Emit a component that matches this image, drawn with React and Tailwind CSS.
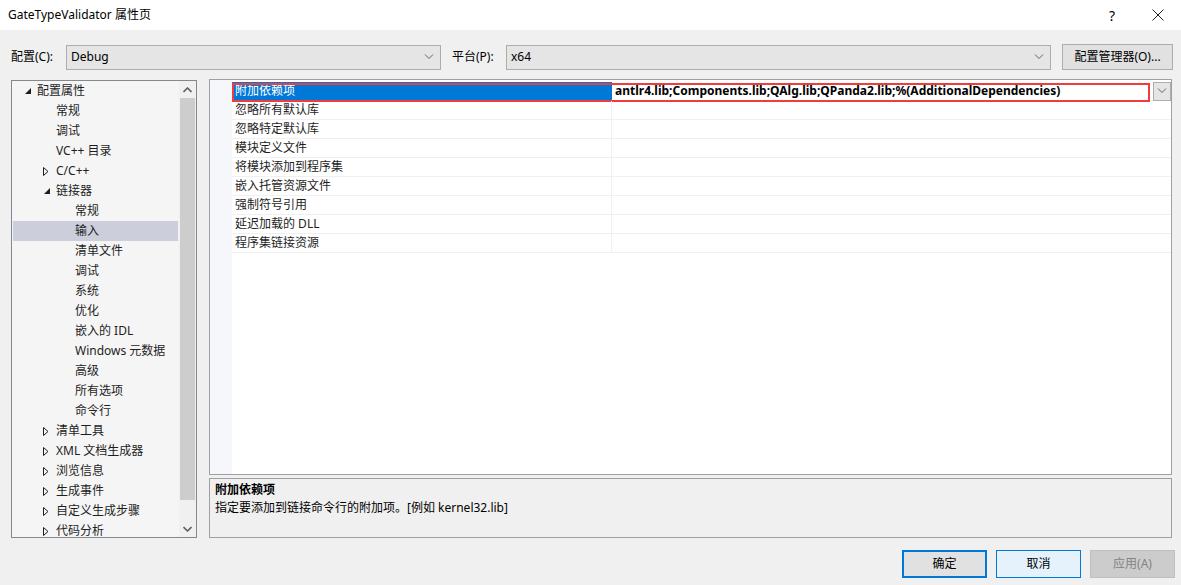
const font = { fontFamily: '"Noto Sans", "Noto Sans CJK SC", sans-serif' };

const tree = [
  { label: '配置属性', level: 0, arrow: 'open' },
  { label: '常规', level: 1 },
  { label: '调试', level: 1 },
  { label: 'VC++ 目录', level: 1 },
  { label: 'C/C++', level: 1, arrow: 'closed' },
  { label: '链接器', level: 1, arrow: 'open' },
  { label: '常规', level: 2 },
  { label: '输入', level: 2, selected: true },
  { label: '清单文件', level: 2 },
  { label: '调试', level: 2 },
  { label: '系统', level: 2 },
  { label: '优化', level: 2 },
  { label: '嵌入的 IDL', level: 2 },
  { label: 'Windows 元数据', level: 2 },
  { label: '高级', level: 2 },
  { label: '所有选项', level: 2 },
  { label: '命令行', level: 2 },
  { label: '清单工具', level: 1, arrow: 'closed' },
  { label: 'XML 文档生成器', level: 1, arrow: 'closed' },
  { label: '浏览信息', level: 1, arrow: 'closed' },
  { label: '生成事件', level: 1, arrow: 'closed' },
  { label: '自定义生成步骤', level: 1, arrow: 'closed' },
  { label: '代码分析', level: 1, arrow: 'closed' },
];

const props = [
  '附加依赖项',
  '忽略所有默认库',
  '忽略特定默认库',
  '模块定义文件',
  '将模块添加到程序集',
  '嵌入托管资源文件',
  '强制符号引用',
  '延迟加载的 DLL',
  '程序集链接资源',
];

function Chevron({ className = '' }) {
  return (
    <svg width="10" height="6" viewBox="0 0 10 6" className={className}>
      <path d="M1 0.5 L5 4.5 L9 0.5" fill="none" stroke="#606060" strokeWidth="1" />
    </svg>
  );
}

function Combo({ value, className }) {
  return (
    <div className={`h-[25px] border border-[#adadad] bg-[#e5e5e5] flex items-center pl-[4px] pr-[6px] ${className}`}>
      <span className="flex-1 text-[12px]">{value}</span>
      <Chevron />
    </div>
  );
}

function Arrow({ type }) {
  if (type === 'open') {
    return (
      <svg width="6" height="6" viewBox="0 0 6 6">
        <path d="M6 0 L6 6 L0 6 Z" fill="#1e1e1e" />
      </svg>
    );
  }
  return (
    <svg width="6" height="9" viewBox="0 0 6 9">
      <path d="M0.5 0.5 L5 4.5 L0.5 8.5 Z" fill="none" stroke="#1e1e1e" strokeWidth="1" />
    </svg>
  );
}

function Tree() {
  return (
    <div className="w-[186px] h-[458px] border border-[#828790] bg-[#f5f5f5] flex overflow-hidden">
      <div className="flex-1 overflow-hidden">
        {tree.map((t, i) => {
          const textX = [24, 43, 62][t.level];
          return (
            <div
              key={i}
              className={`h-[20px] flex items-center relative mx-[1px] ${t.selected ? 'bg-[#cccedb]' : ''}`}
            >
              {t.arrow && (
                <span
                  className="absolute flex items-center"
                  style={{ left: textX - (t.arrow === 'open' ? 12 : 13) }}
                >
                  <Arrow type={t.arrow} />
                </span>
              )}
              <span className="text-[12px] text-[#1e1e1e] whitespace-nowrap" style={{ paddingLeft: textX }}>
                {t.label}
              </span>
            </div>
          );
        })}
      </div>
      <div className="w-[17px] bg-[#f0f0f0] flex flex-col">
        <div className="h-[17px] flex items-center justify-center">
          <svg width="9" height="6" viewBox="0 0 9 6">
            <path d="M0.5 5 L4.5 1 L8.5 5" fill="none" stroke="#606060" strokeWidth="1.6" />
          </svg>
        </div>
        <div className="h-[402px] bg-[#cdcdcd] mx-[1px]" />
        <div className="flex-1" />
        <div className="h-[17px] flex items-center justify-center">
          <svg width="9" height="6" viewBox="0 0 9 6">
            <path d="M0.5 1 L4.5 5 L8.5 1" fill="none" stroke="#606060" strokeWidth="1.6" />
          </svg>
        </div>
      </div>
    </div>
  );
}

function Grid() {
  return (
    <div className="h-[396px] border border-[#a0a0a0] bg-white flex">
      <div className="w-[22px] bg-[#f5f7fb]" />
      <div className="flex-1 pt-[2px]">
        {props.map((p, i) => {
          const sel = i === 0;
          return (
            <div key={i} className="h-[19px] flex relative">
              <div
                className={`w-[380px] flex items-center pl-[3px] text-[12px] border-b border-[#f0f0f0] border-r ${
                  sel ? 'bg-[#0078d7] text-white border-r-[#0078d7]' : 'text-[#1e1e1e] border-r-[#f0f0f0]'
                }`}
              >
                {p}
              </div>
              <div className="flex-1 flex items-center border-b border-[#f0f0f0]">
                {sel && (
                  <>
                    <span className="flex-1 pl-[3px] text-[12px] font-bold text-black whitespace-nowrap">
                      antlr4.lib;Components.lib;QAlg.lib;QPanda2.lib;%(AdditionalDependencies)
                    </span>
                    <span className="w-[18px] h-[19px] border border-[#adadad] bg-[#e5e5e5] flex items-center justify-center">
                      <Chevron />
                    </span>
                  </>
                )}
              </div>
              {sel && (
                <div className="absolute left-0 top-[1px] h-[19px] w-[918px] border-2 border-[#f03c3c] pointer-events-none" />
              )}
            </div>
          );
        })}
      </div>
    </div>
  );
}

export default function App() {
  return (
    <div className="w-[1181px] h-[585px] bg-[#f0f0f0] flex flex-col text-black" style={font}>
      <div className="h-[30px] bg-white flex items-center pl-[8px]">
        <span className="text-[12px] flex-1">GateTypeValidator 属性页</span>
        <span className="text-[14px] w-[46px] text-center">?</span>
        <span className="w-[46px] flex justify-center">
          <svg width="12" height="12" viewBox="0 0 12 12">
            <path d="M0.5 0.5 L11.5 11.5 M11.5 0.5 L0.5 11.5" stroke="#1e1e1e" strokeWidth="1" />
          </svg>
        </span>
      </div>

      <div className="flex items-center mt-[14px] pl-[11px] h-[26px]">
        <span className="text-[12px] w-[55px]">配置(C):</span>
        <Combo value="Debug" className="w-[375px]" />
        <span className="text-[12px] ml-[11px] w-[54px]">平台(P):</span>
        <Combo value="x64" className="w-[545px]" />
        <button className="ml-[11px] w-[111px] h-[26px] border border-[#adadad] bg-[#e1e1e1] text-[12px]">
          配置管理器(O)...
        </button>
      </div>

      <div className="flex pl-[11px] mt-[10px] gap-[12px]">
        <Tree />
        <div className="w-[963px] flex flex-col gap-[3px] -mt-[1px]">
          <Grid />
          <div className="h-[60px] border border-[#a0a0a0] bg-[#f0f0f0] px-[5px] pt-[2px]">
            <div className="text-[12px] font-bold leading-[18px]">附加依赖项</div>
            <div className="text-[12px] leading-[18px]">指定要添加到链接命令行的附加项。[例如 kernel32.lib]</div>
          </div>
        </div>
      </div>

      <div className="flex justify-end gap-[9px] pr-[6px] mt-[12px]">
        <button className="w-[85px] h-[28px] border-2 border-[#0078d7] bg-[#e1e1e1] text-[12px]">确定</button>
        <button className="w-[85px] h-[28px] border border-[#0078d7] bg-[#e5f1fb] text-[12px]">取消</button>
        <button className="w-[85px] h-[28px] border border-[#bfbfbf] bg-[#cccccc] text-[12px] text-[#838383]">应用(A)</button>
      </div>
    </div>
  );
}
